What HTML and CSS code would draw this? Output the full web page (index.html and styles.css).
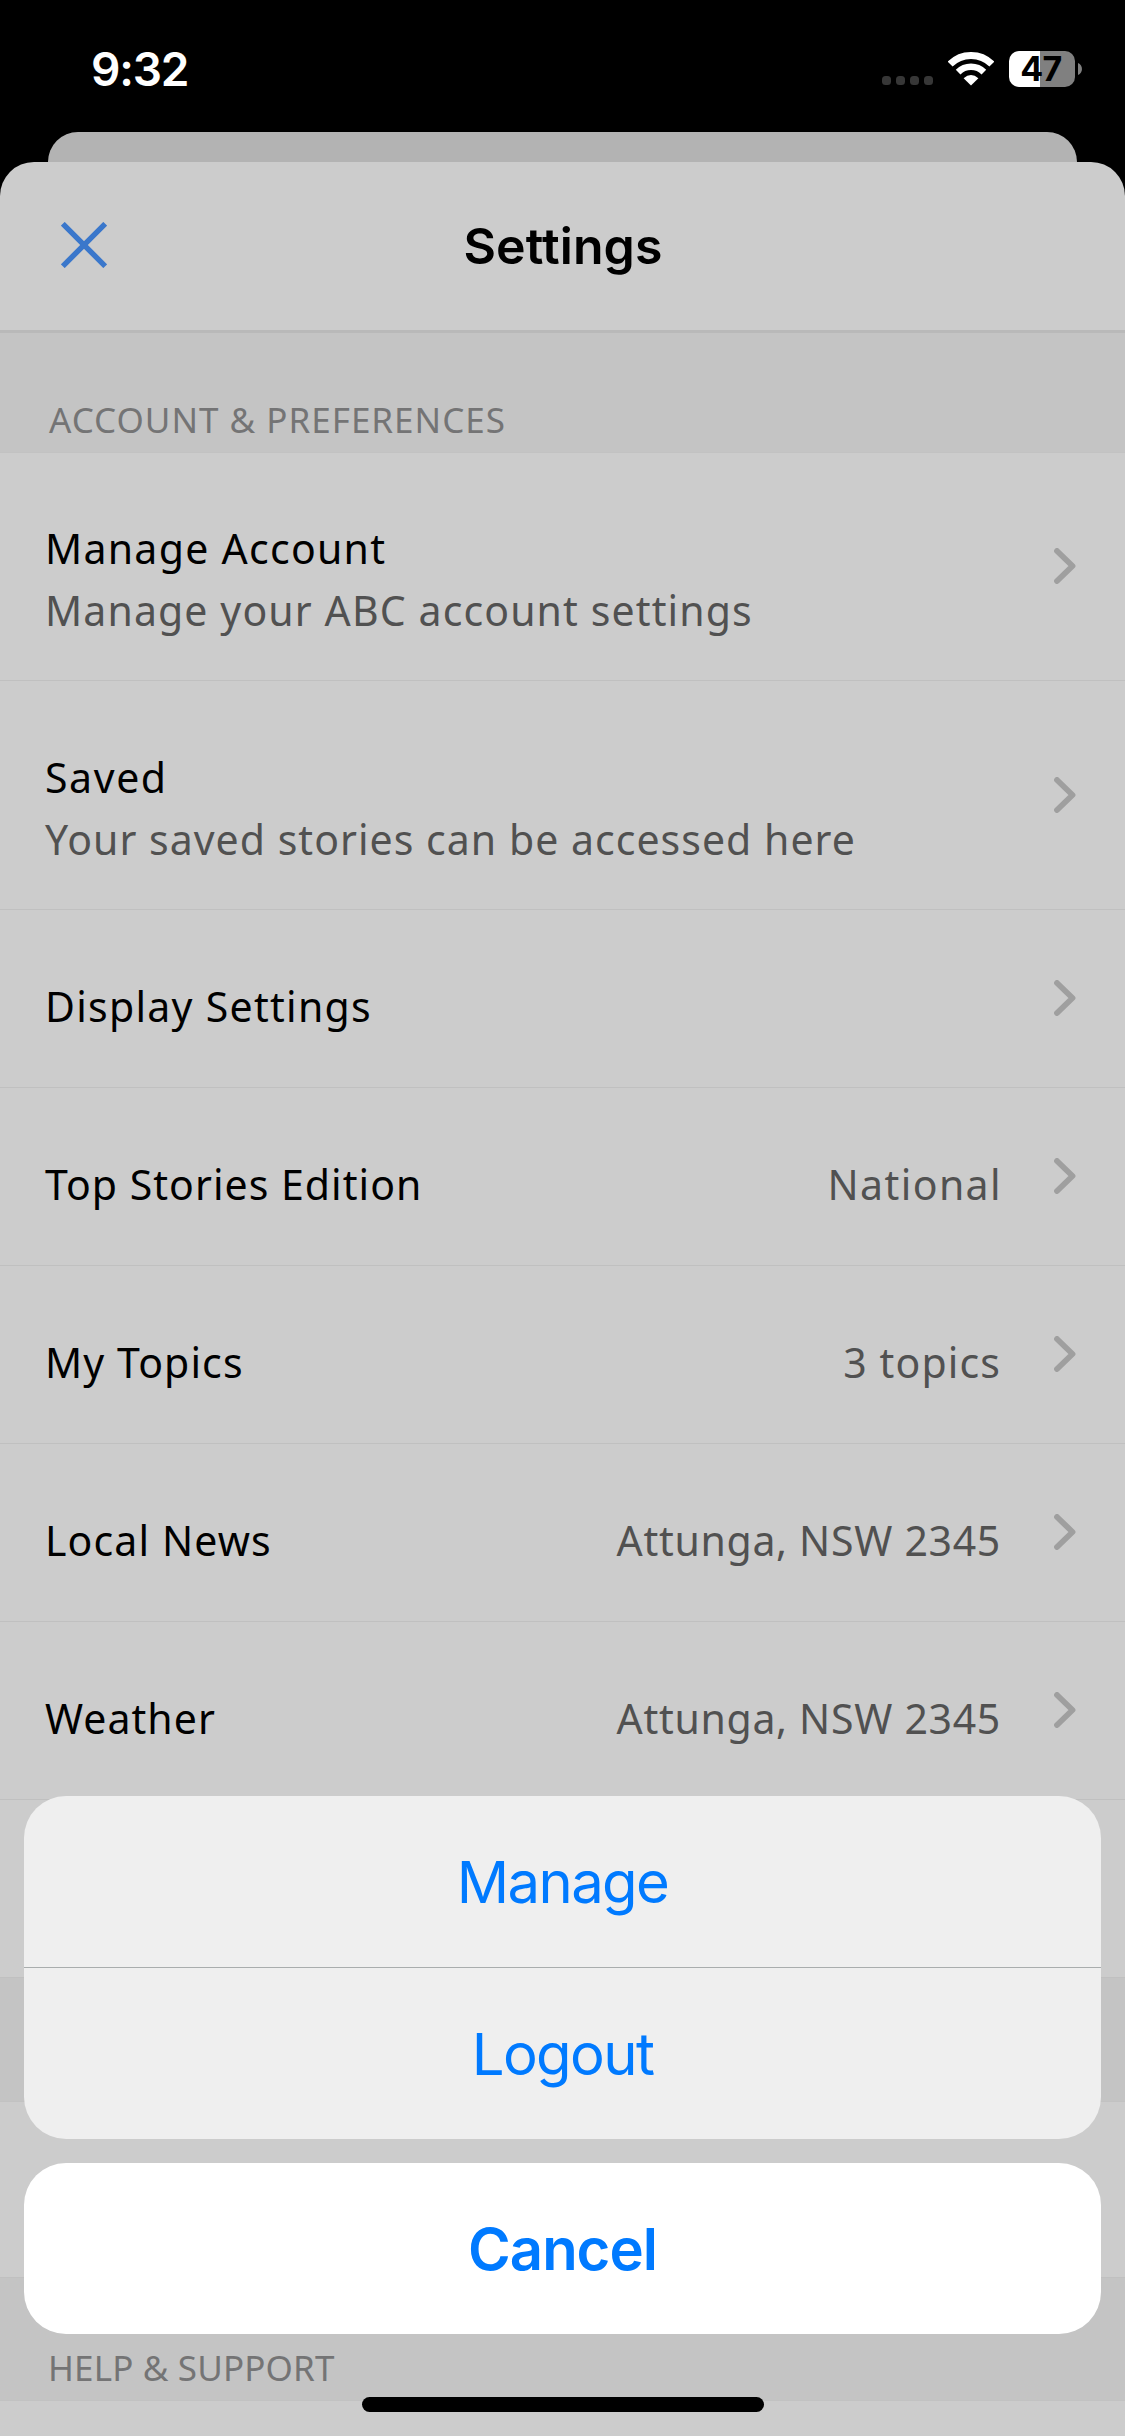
FILE: index.html
```
<!DOCTYPE html>
<html lang="en">
<head>
<meta charset="utf-8">
<title>Settings</title>
<link rel="stylesheet" href="styles.css">
</head>
<body>
<svg class="defs" aria-hidden="true">
  <symbol id="chevron" viewBox="0 0 22 36"><path d="M3 3 L18.5 18 L3 33" fill="none" stroke="currentColor" stroke-width="5.8" stroke-linecap="round" stroke-linejoin="round"/></symbol>
</svg>
<div class="screen">
  <header class="status">
    <span class="time">9:32</span>
    <div class="indicators">
      <div class="signal"><i></i><i></i><i></i><i></i></div>
      <svg class="wifi" viewBox="0 0 46 34">
        <path d="M2.14 12.14 A29.5 29.5 0 0 1 43.86 12.14" fill="none" stroke="#fff" stroke-width="7"/>
        <path d="M10.13 20.13 A18.2 18.2 0 0 1 35.87 20.13" fill="none" stroke="#fff" stroke-width="6.6"/>
        <path d="M23 33.6 L15.6 26.2 Q23 20 30.4 26.2 Z" fill="#fff"/>
      </svg>
      <div class="battery"><span class="level">47</span><svg class="cap" viewBox="0 0 4 12"><path d="M0 0 C5.3 2.4 5.3 9.6 0 12 Z" fill="#808080"/></svg></div>
    </div>
  </header>
  <div class="back-card"></div>
  <main class="sheet">
    <div class="navbar">
      <svg class="close" viewBox="0 0 46 46"><path d="M1.8 1.8 L44.2 44.2 M44.2 1.8 L1.8 44.2" stroke="#3a77cb" stroke-width="5.4" fill="none"/></svg>
      <h1>Settings</h1>
    </div>
    <h2 class="section section-first">ACCOUNT &amp; PREFERENCES</h2>
    <div class="list">
      <div class="row double">
        <div class="text"><span class="t13">Manage Account</span><span class="sub t11">Manage your ABC account settings</span></div>
        <svg class="chevron"><use href="#chevron"/></svg>
      </div>
      <div class="row double">
        <div class="text"><span class="t16">Saved</span><span class="sub t10">Your saved stories can be accessed here</span></div>
        <svg class="chevron"><use href="#chevron"/></svg>
      </div>
      <div class="row">
        <div class="text"><span class="t13">Display Settings</span></div>
        <svg class="chevron"><use href="#chevron"/></svg>
      </div>
      <div class="row">
        <div class="text"><span class="t10">Top Stories Edition</span></div>
        <div class="value value-wide t14">National</div>
        <svg class="chevron"><use href="#chevron"/></svg>
      </div>
      <div class="row">
        <div class="text"><span class="t11">My Topics</span></div>
        <div class="value t11">3 topics</div>
        <svg class="chevron"><use href="#chevron"/></svg>
      </div>
      <div class="row">
        <div class="text"><span class="t11">Local News</span></div>
        <div class="value t07">Attunga, NSW 2345</div>
        <svg class="chevron"><use href="#chevron"/></svg>
      </div>
      <div class="row">
        <div class="text"><span class="t10">Weather</span></div>
        <div class="value t07">Attunga, NSW 2345</div>
        <svg class="chevron"><use href="#chevron"/></svg>
      </div>
      <div class="row"></div>
    </div>
    <div class="section section-blank"></div>
    <div class="list"><div class="row last"></div></div>
    <h2 class="section section-help">HELP &amp; SUPPORT</h2>
    <div class="list"><div class="row"></div></div>
  </main>
  <div class="actions">
    <div class="group">
      <div class="action">Manage</div>
      <div class="action">Logout</div>
    </div>
    <div class="action cancel">Cancel</div>
  </div>
  <div class="home"></div>
</div>
</body>
</html>
```
FILE: styles.css
```
* { box-sizing: border-box; }
body { margin: 0; background: #000; }
.defs { position: absolute; width: 0; height: 0; }
.screen {
  position: relative;
  display: flex;
  flex-direction: column;
  width: 1125px;
  height: 2436px;
  overflow: hidden;
  background: #000;
  font-family: Inter, "Liberation Sans", sans-serif;
}

/* Status bar */
.status {
  display: flex;
  flex: none;
  justify-content: space-between;
  align-items: flex-start;
  height: 132px;
  padding: 51px 43px 0 91px;
  color: #fff;
}
.time { font-size: 46px; font-weight: 600; line-height: 36px; letter-spacing: -1.2px; }
.indicators { display: flex; align-items: flex-end; }
.signal { display: flex; gap: 5px; margin: 0 15px 2px 0; }
.signal i { width: 9px; height: 9px; border-radius: 3.5px; background: #373737; }
.wifi { width: 46px; height: 34px; margin: 0 15px 1px 0; }
.battery { display: flex; align-items: center; gap: 3px; }
.level {
  width: 66px;
  height: 36px;
  padding-right: 2px;
  border-radius: 10px;
  background: linear-gradient(90deg, #fff 31px, #808080 31px);
  color: #000;
  font-size: 34px;
  font-weight: 700;
  line-height: 36px;
  letter-spacing: -0.7px;
  text-align: center;
}
.cap { width: 4px; height: 12px; }

/* Stacked sheets */
.back-card { flex: none; height: 30px; margin: 0 48px; border-radius: 30px 30px 0 0; background: #b3b3b3; }
.sheet { flex: 1; min-height: 0; overflow: hidden; border-radius: 34px 34px 0 0; background: #ccc; }
.navbar {
  display: grid;
  grid-template-columns: 1fr auto 1fr;
  align-items: center;
  height: 171px;
  padding: 0 60px 0 61px;
  border-bottom: 3px solid #b9b9b9;
}
.close { width: 46px; height: 46px; margin-top: -2px; }
h1 { margin: 0; font-size: 50px; font-weight: 600; line-height: 168px; letter-spacing: 0.1px; color: #000; }

/* Settings list */
.section {
  display: flex;
  align-items: flex-end;
  margin: 0;
  padding: 0 49px 8px;
  background: #c4c4c4;
  color: #747475;
  font: 400 35px/48px "Noto Sans", sans-serif;
  letter-spacing: 1px;
}
.section-first { height: 119px; }
.section-blank { height: 123px; }
.section-help { height: 122px; padding-left: 48px; letter-spacing: 0.15px; }
.list { box-shadow: inset 0 1px #c2c2c2; }
.row {
  display: flex;
  height: 178px;
  padding: 0 49px 0 45px;
  border-bottom: 1px solid #c0c0c0;
  font: 400 41px/62px "Noto Sans", sans-serif;
  color: #000;
}
.double { height: 229px; }
.last { height: 177px; }
.text { display: flex; flex: 1; flex-direction: column; padding-top: 65px; }
.sub, .value { color: #515151; }
.value { padding-top: 65px; margin-right: 53px; }
.value-wide { margin-right: 52px; }
.chevron { align-self: center; width: 22px; height: 36px; margin-bottom: 1px; color: #9f9f9f; }
.t07 { letter-spacing: 0.7px; }
.t10 { letter-spacing: 1.03px; }
.t11 { letter-spacing: 1.12px; }
.t13 { letter-spacing: 1.28px; }
.t14 { letter-spacing: 1.4px; }
.t16 { letter-spacing: 1.6px; }

/* Action sheet */
.actions {
  position: absolute;
  left: 24px;
  right: 24px;
  bottom: 102px;
  display: flex;
  flex-direction: column;
  gap: 24px;
}
.group { overflow: hidden; border-radius: 42px; background: #efefef; }
.action {
  height: 171px;
  font-size: 58px;
  line-height: 173px;
  letter-spacing: -1.6px;
  text-align: center;
  color: #007aff;
}
.group .action + .action { height: 172px; border-top: 1px solid #a9adad; }
.cancel { border-radius: 42px; background: #fff; font-weight: 600; letter-spacing: -1px; }
.home {
  position: absolute;
  bottom: 24px;
  left: 362px;
  width: 402px;
  height: 15px;
  border-radius: 8px;
  background: #000;
}
```
